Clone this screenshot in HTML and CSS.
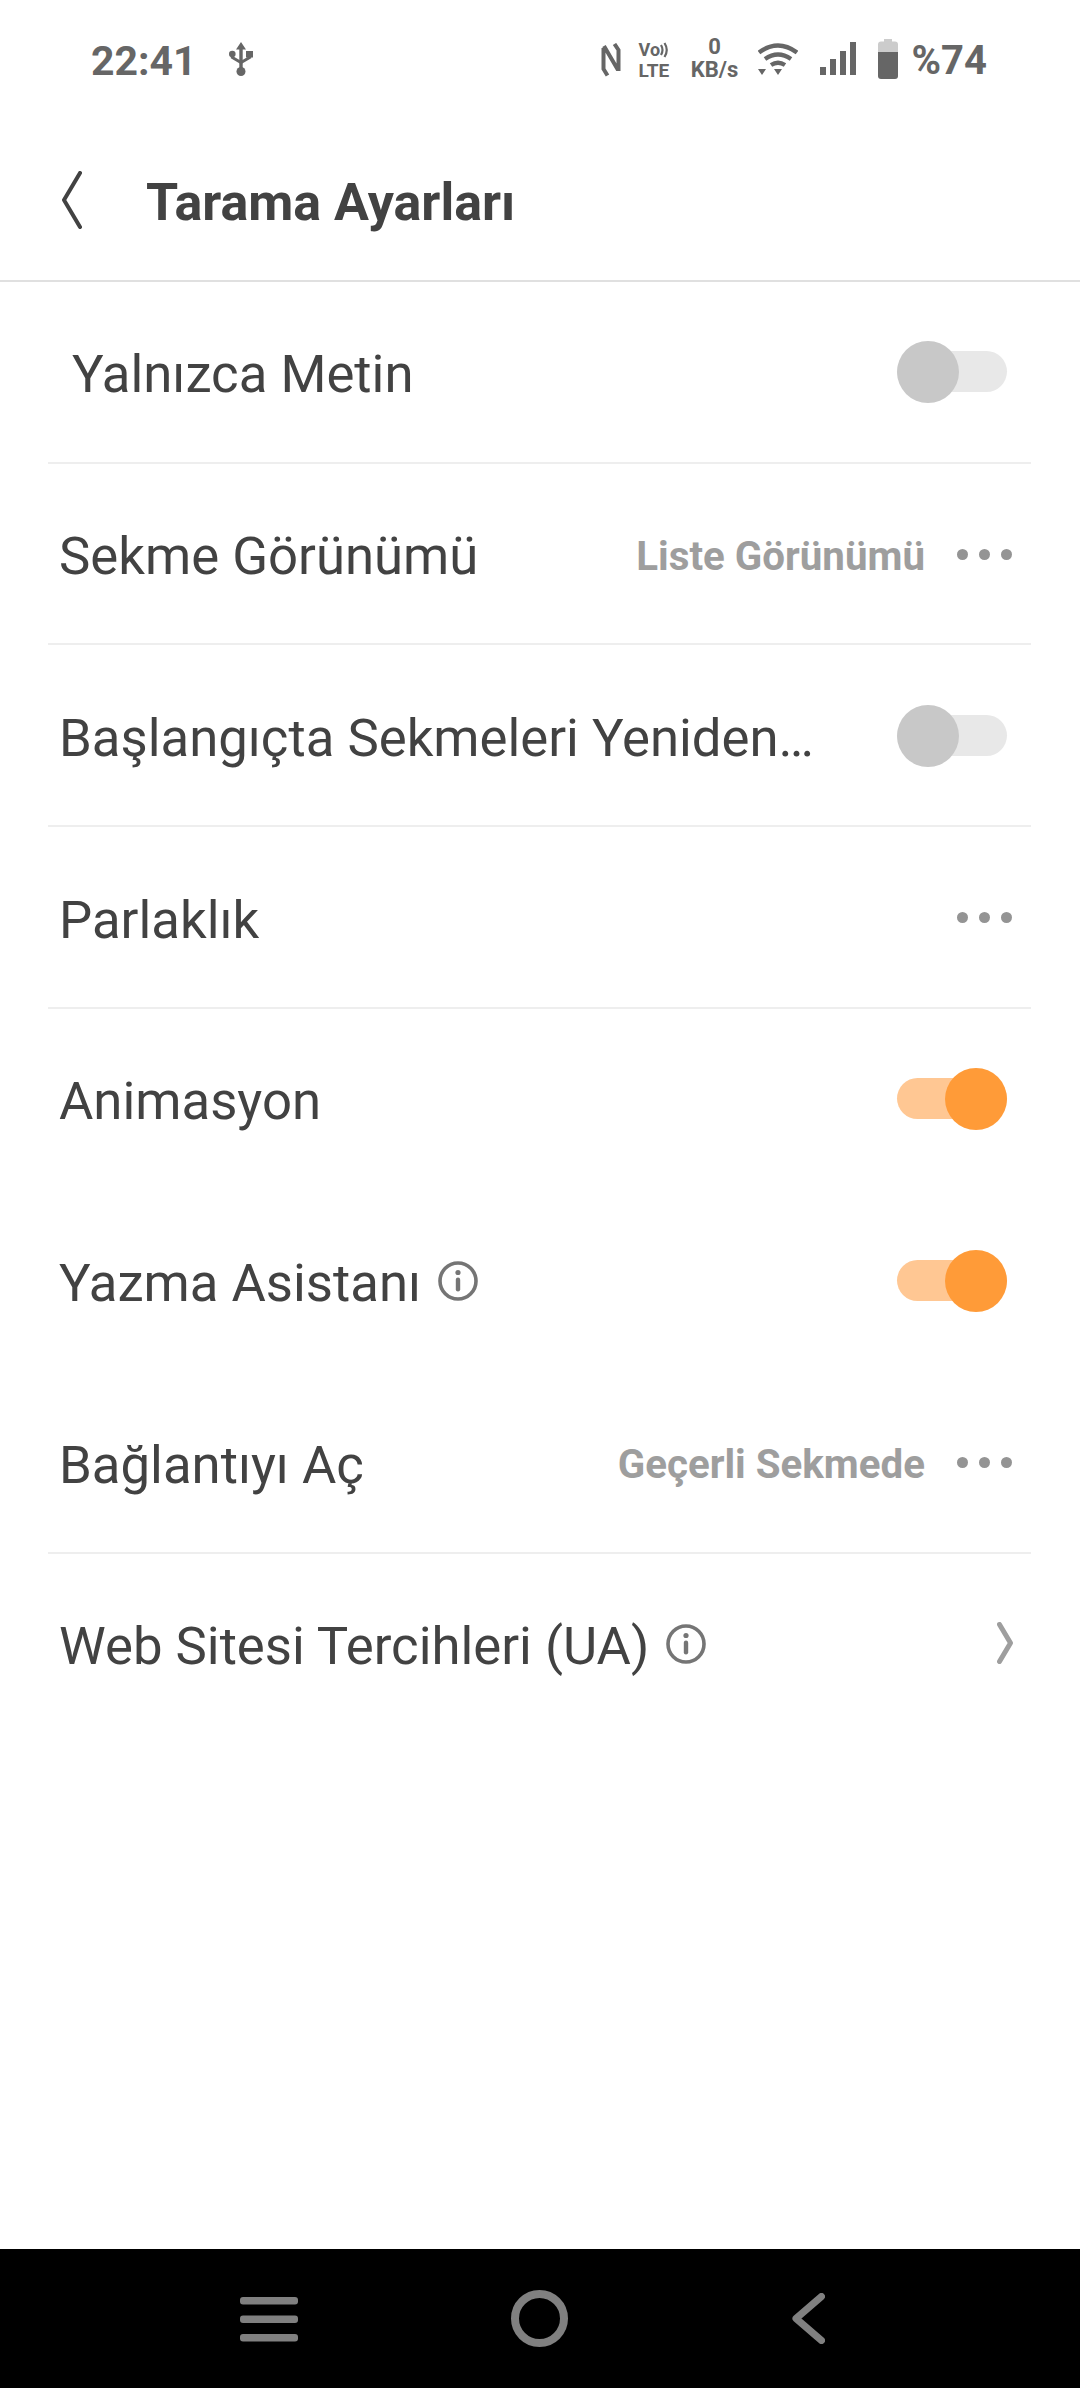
FILE: index.html
```html
<!DOCTYPE html>
<html lang="tr">
<head>
	<meta charset="UTF-8">
	<meta name="viewport" content="width=device-width, initial-scale=1.0">
	<title>Tarama Ayarları</title>
	<link rel="stylesheet" href="styles.css">
</head>
<body>
	<div class="page">
		<div class="status-bar">
			<span class="status-time">22:41</span>
			<svg class="ic-usb" viewBox="0 0 24 34" width="24" height="34">
				<path d="M12 0l-5 7.500h3.300V26h3.400V7.500H17z" fill="#666"/>
				<circle cx="12" cy="29.500" r="4.500" fill="#666"/>
				<circle cx="3.300" cy="12" r="3.300" fill="#666"/>
				<rect x="17" y="9" width="7" height="6.500" fill="#666"/>
				<path d="M3.300 12v3.500l8.700 5 8.700-5V12" fill="none" stroke="#666" stroke-width="3"/>
			</svg>
			<div class="status-right">
				<svg class="ic-nfc" viewBox="0 0 20 34" width="20" height="34">
					<path d="M2.500 5v21l4 6.500M3 3l14 24M17.500 28V7l-4-6" fill="none" stroke="#666" stroke-width="4"/>
				</svg>
				<div class="volte">
					<div class="volte-top">Vo<svg viewBox="0 0 10 16" width="10" height="16"><path d="M1 3q3 5 0 10M4.500 1q4.500 7 0 14" fill="none" stroke="#666" stroke-width="2.200"/></svg></div>
					<div class="volte-bottom">LTE</div>
				</div>
				<div class="speed">
					<div class="speed-num">0</div>
					<div class="speed-unit">KB/s</div>
				</div>
				<svg class="ic-wifi" viewBox="0 0 40 32" width="40" height="32">
					<path d="M1 9.500q19-14 38 0M7 16q13-9 26 0M13 22q7-4.500 14 0" fill="none" stroke="#666" stroke-width="4.400"/>
					<path d="M0 26h8l-4 6zM16 26h8l-4 6z" fill="#666"/>
				</svg>
				<svg class="ic-signal" viewBox="0 0 36 33" width="36" height="33">
					<rect x="0" y="25" width="6" height="8" fill="#666"/>
					<rect x="10" y="17" width="6" height="16" fill="#666"/>
					<rect x="20" y="9" width="6" height="24" fill="#666"/>
					<rect x="30" y="0" width="6" height="33" fill="#666"/>
				</svg>
				<svg class="ic-battery" viewBox="0 0 20 40" width="20" height="40">
					<path d="M6 0h8v2.500h3a3 3 0 0 1 3 3V13H0V5.500a3 3 0 0 1 3-3h3z" fill="#ccc"/>
					<path d="M0 13h20v24a3 3 0 0 1-3 3H3a3 3 0 0 1-3-3z" fill="#666"/>
				</svg>
				<span class="status-battery">%74</span>
			</div>
		</div>

		<div class="header">
			<a href="#" class="btn-back">
				<svg viewBox="0 0 20 58" width="20" height="58"><path d="M18 2L2 29l16 27" fill="none" stroke="#424242" stroke-width="4" stroke-linecap="round" stroke-linejoin="round"/></svg>
			</a>
			<h1 class="title">Tarama Ayarları</h1>
		</div>

		<ul class="list-setting">
			<li class="item-setting line">
				<span class="label label-first">Yalnızca Metin</span>
				<span class="switch"><span class="knob"></span></span>
			</li>
			<li class="item-setting line">
				<span class="label">Sekme Görünümü</span>
				<span class="value">Liste Görünümü</span>
				<span class="dots"><i></i><i></i><i></i></span>
			</li>
			<li class="item-setting line">
				<span class="label">Başlangıçta Sekmeleri Yeniden…</span>
				<span class="switch"><span class="knob"></span></span>
			</li>
			<li class="item-setting line">
				<span class="label">Parlaklık</span>
				<span class="dots"><i></i><i></i><i></i></span>
			</li>
			<li class="item-setting">
				<span class="label">Animasyon</span>
				<span class="switch on"><span class="knob"></span></span>
			</li>
			<li class="item-setting">
				<span class="label">Yazma Asistanı</span>
				<svg class="ic-info" viewBox="0 0 40 40" width="40" height="40">
					<circle cx="20" cy="20" r="18" fill="none" stroke="#757575" stroke-width="3.600"/>
					<circle cx="20" cy="11.500" r="2.600" fill="#757575"/>
					<rect x="17.800" y="16.500" width="4.400" height="14" rx="2.200" fill="#757575"/>
				</svg>
				<span class="switch on"><span class="knob"></span></span>
			</li>
			<li class="item-setting line">
				<span class="label">Bağlantıyı Aç</span>
				<span class="value">Geçerli Sekmede</span>
				<span class="dots"><i></i><i></i><i></i></span>
			</li>
			<li class="item-setting">
				<span class="label">Web Sitesi Tercihleri (UA)</span>
				<svg class="ic-info" viewBox="0 0 40 40" width="40" height="40">
					<circle cx="20" cy="20" r="18" fill="none" stroke="#757575" stroke-width="3.600"/>
					<circle cx="20" cy="11.500" r="2.600" fill="#757575"/>
					<rect x="17.800" y="16.500" width="4.400" height="14" rx="2.200" fill="#757575"/>
				</svg>
				<svg class="ic-next" viewBox="0 0 16 42" width="16" height="42">
					<path d="M2.500 2.500l11 18.500-11 18.500" fill="none" stroke="#9e9e9e" stroke-width="5" stroke-linecap="round" stroke-linejoin="round"/>
				</svg>
			</li>
		</ul>

		<div class="nav-bar">
			<svg class="nav-menu" viewBox="0 0 58 45" width="58" height="45">
				<rect x="0" y="0" width="58" height="7.500" rx="3" fill="#808080"/>
				<rect x="0" y="18.500" width="58" height="7.500" rx="3" fill="#808080"/>
				<rect x="0" y="37" width="58" height="7.500" rx="3" fill="#808080"/>
			</svg>
			<svg class="nav-home" viewBox="0 0 57 57" width="57" height="57">
				<circle cx="28.500" cy="28.500" r="24.500" fill="none" stroke="#808080" stroke-width="8"/>
			</svg>
			<svg class="nav-back" viewBox="0 0 33 51" width="33" height="51">
				<path d="M29.500 3.500L4 25.500l25.500 22" fill="none" stroke="#808080" stroke-width="7" stroke-linecap="round" stroke-linejoin="round"/>
			</svg>
		</div>
	</div>
</body>
</html>
```

FILE: styles.css
```css
html, body{ margin: 0; padding: 0; background: #fff; }
.page{
	width: 1080px; height: 2388px; display: flex; flex-direction: column;
	font-family: Roboto, "Noto Sans", sans-serif; color: #424242;
}

/* status bar */
.status-bar{
	height: 120px; box-sizing: border-box; padding: 40px 93px 0 91px;
	display: flex; align-items: flex-start;
}
.status-time{ font-size: 41px; font-weight: 700; line-height: 42px; color: #666; }
.ic-usb{ margin: 2px 0 0 32px; }
.status-right{ margin-left: auto; display: flex; align-items: flex-start; }
.ic-nfc{ margin: 3px 0 0 0; }
.volte{ margin: 1px 0 0 18px; width: 32px; color: #666; font-weight: 700; }
.volte-top{ font-size: 18px; line-height: 18px; display: flex; align-items: center; }
.volte-bottom{ font-size: 19px; line-height: 24px; }
.speed{ margin: -4px 0 0 19px; width: 50px; text-align: center; color: #666; font-weight: 700; }
.speed-num{ font-size: 22px; line-height: 22px; }
.speed-unit{ font-size: 22px; line-height: 23px; }
.ic-wifi{ margin: 3px 0 0 18px; }
.ic-signal{ margin: 2px 0 0 22px; }
.ic-battery{ margin: -1px 0 0 22px; }
.status-battery{ margin-left: 14px; font-size: 40px; font-weight: 700; line-height: 42px; color: #666; }

/* header */
.header{
	height: 162px; box-sizing: border-box; border-bottom: 2px solid #e0e0e0;
	display: flex; align-items: center; padding-left: 62px;
}
.btn-back{ display: block; height: 58px; }
.title{ margin: 5px 0 0 64px; font-size: 52px; font-weight: 700; color: #424242; }

/* list */
.list-setting{ list-style: none; margin: 0; padding: 0; flex: 1; }
.item-setting{
	height: 181.670px; box-sizing: border-box; margin: 0 49px 0 48px;
	padding: 0 24px 0 11px; border-bottom: 2px solid transparent;
	display: flex; align-items: center;
}
.item-setting.line{ border-bottom-color: #eeeeee; }
.label{ margin-top: 6px; font-size: 52.700px; color: #424242; white-space: nowrap; }
.label-first{ margin: 4px 0 0 13px; }
.value{ margin: 6px 0 0 auto; font-size: 40.300px; font-weight: 700; color: #9e9e9e; }
.dots{ display: flex; gap: 11px; margin: 2px -5px 0 32px; }
.label + .dots{ margin-left: auto; }
.dots i{ width: 11px; height: 11px; border-radius: 50%; background: #949494; }
.switch{
	margin-left: auto; width: 110px; height: 41px; border-radius: 21px;
	background: #e8e8e8; position: relative;
}
.knob{
	position: absolute; left: 0; top: -10px; width: 62px; height: 62px;
	border-radius: 50%; background: #c8c8c8;
}
.switch.on{ background: #ffc793; }
.switch.on .knob{ left: auto; right: 0; background: #ff9b38; }
.ic-info{ margin: 2px 0 0 17px; }
.ic-next{ margin: 0 -6px 0 auto; }

/* nav */
.nav-bar{
	height: 139px; background: #000; box-sizing: border-box;
	padding: 41px 0 0 240px; display: flex; align-items: flex-start;
}
.nav-bar svg{ display: block; }
.nav-menu{ margin-top: 7px; }
.nav-home{ margin-left: 213px; }
.nav-back{ margin: 3px 0 0 224px; }
```
